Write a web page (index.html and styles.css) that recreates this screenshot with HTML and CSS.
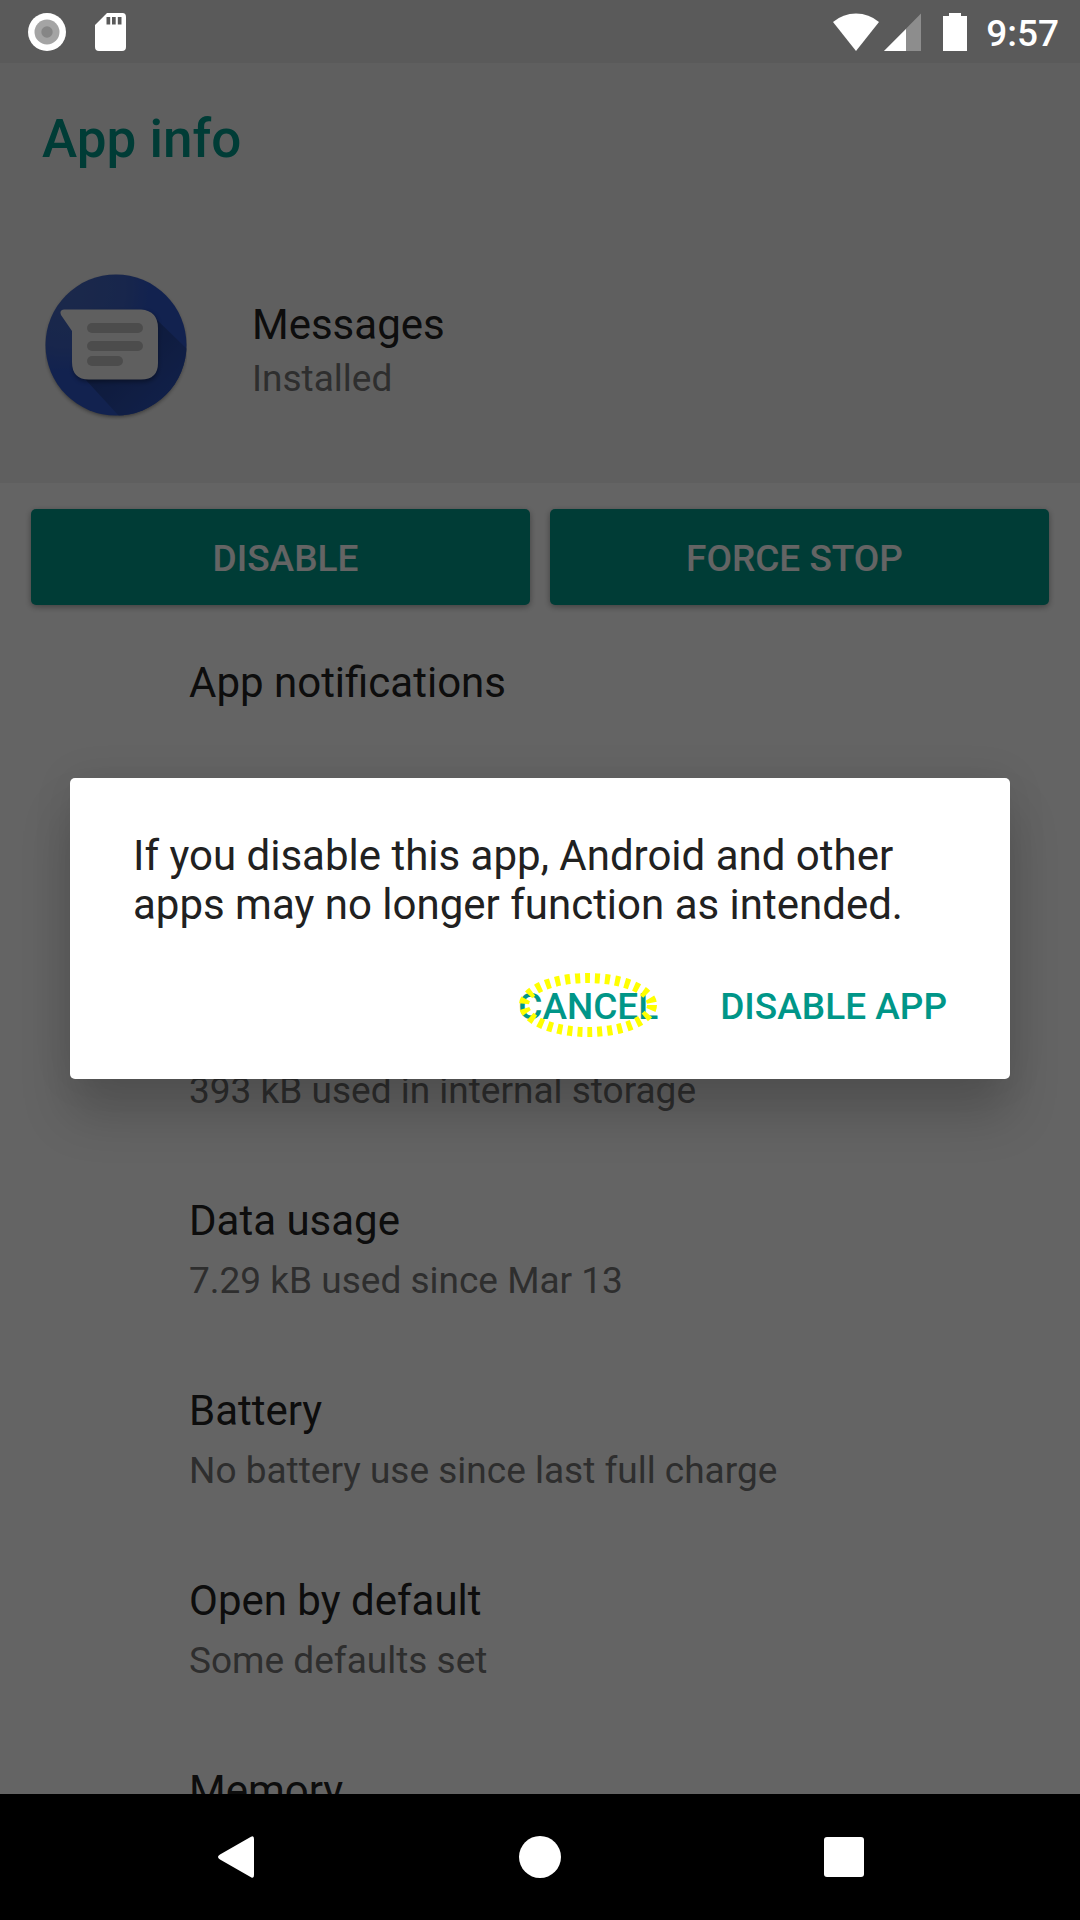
FILE: index.html
```html
<!DOCTYPE html>
<html lang="en">
<head>
<meta charset="utf-8">
<meta name="viewport" content="width=device-width, initial-scale=1">
<title>App info</title>
<link rel="stylesheet" href="styles.css">
</head>
<body>
<div class="screen">
  <div class="status-bar">
    <div class="status-group status-left">
      <svg width="38" height="38" viewBox="0 0 38 38" aria-hidden="true"><circle cx="19" cy="19" r="19" fill="#fff"/><circle cx="19" cy="19" r="12.5" fill="#a4a4a4"/><circle cx="19" cy="19" r="5.7" fill="#868686"/></svg>
      <svg width="31" height="38" viewBox="0 0 31 38" aria-hidden="true"><path fill="#fff" fill-rule="evenodd" d="M12 0H27.500Q31 0 31 4V34Q31 38 27 38H4Q0 38 0 34V12ZM11.500 4V11.500H15.200V4ZM17 4V11.500H20.700V4ZM22.800 4V11.500H26.500V4Z"/></svg>
    </div>
    <div class="status-group">
      <svg width="46" height="38" viewBox="0 0 46 38" aria-hidden="true"><path fill="#fff" d="M0 9Q10 .5 23 .5T46 9L23 38Z"/></svg>
      <svg class="signal" width="37" height="38" viewBox="0 0 37 38" aria-hidden="true"><path fill="#8d8d8d" d="M37 .5V38H0Z"/><path fill="#fff" d="M22 16V38H0Z"/></svg>
      <svg class="battery" width="24" height="38" viewBox="0 0 24 38" aria-hidden="true"><path fill="#fff" d="M6 0H18V3H24V38H0V3H6Z"/></svg>
      <time class="clock">9:57</time>
    </div>
  </div>

  <main class="content">
    <header class="app-header">
      <h1 class="page-title">App info</h1>
      <div class="app-summary">
        <svg class="app-icon" width="142" height="146" viewBox="0 0 142 146" aria-hidden="true">
          <defs>
            <radialGradient id="disc" cx="0.15" cy="0.1" r="0.6"><stop offset="0" stop-color="#4566bb"/><stop offset="0.7" stop-color="#3c5fbd"/><stop offset="1" stop-color="#2d55c6"/></radialGradient>
            <linearGradient id="fall" x1="0" y1="0" x2="1" y2="1"><stop offset="0.2" stop-color="#223f8c"/><stop offset="0.8" stop-color="#2b50b4"/></linearGradient>
            <clipPath id="round"><circle cx="71" cy="71" r="70.500"/></clipPath>
            <filter id="soft" x="-20%" y="-20%" width="140%" height="140%"><feGaussianBlur stdDeviation="2"/></filter>
          </defs>
          <circle cx="71" cy="73" r="69.500" fill="#000" opacity=".5" filter="url(#soft)"/>
          <circle cx="71" cy="71" r="70.500" fill="url(#disc)"/>
          <g clip-path="url(#round)">
            <path d="M110 44L142 75V142H74L40 105Z" fill="url(#fall)"/>
            <path d="M44 38H98Q113 38 113 53V92Q113 108 97 108H44Q28 108 28 92Z" fill="#000" opacity=".35" filter="url(#soft)"/>
          </g>
          <path fill="#eee" d="M19 35.500H96Q113 37 113 54V89Q113 105.500 96 105.500H44Q27 105.500 27 88V57L16 41Q14 36 19 35.500Z"/>
          <g fill="#bdbdbd"><rect x="42" y="49" width="56" height="10" rx="5"/><rect x="42" y="67" width="56" height="10" rx="5"/><rect x="42" y="82" width="36" height="10" rx="5"/></g>
        </svg>
        <div>
          <h2 class="item-title">Messages</h2>
          <p class="item-note">Installed</p>
        </div>
      </div>
    </header>

    <div class="actions">
      <button class="action action-start" type="button">DISABLE</button>
      <button class="action action-end" type="button">FORCE STOP</button>
    </div>

    <ul class="settings">
      <li class="setting setting-tall"><h2 class="item-title">App notifications</h2></li>
      <li class="setting setting-end"><p class="item-note">393 kB used in internal storage</p></li>
      <li class="setting"><h2 class="item-title">Data usage</h2><p class="item-note">7.29 kB used since Mar 13</p></li>
      <li class="setting"><h2 class="item-title">Battery</h2><p class="item-note">No battery use since last full charge</p></li>
      <li class="setting"><h2 class="item-title">Open by default</h2><p class="item-note">Some defaults set</p></li>
      <li class="setting"><h2 class="item-title">Memory</h2></li>
    </ul>

    <div class="scrim">
      <div class="dialog" role="alertdialog" aria-modal="true" aria-describedby="message">
        <p class="message" id="message">If you disable this app, Android and other apps may no longer function as intended.</p>
        <div class="dialog-actions">
          <button class="choice" type="button">CANCEL<svg class="ring" width="140" height="66" viewBox="0 0 140 66" aria-hidden="true"><ellipse cx="70" cy="33" rx="64" ry="27" fill="none" stroke="#ff0" stroke-width="10" stroke-dasharray="5 5"/></svg></button>
          <button class="choice" type="button">DISABLE APP</button>
        </div>
      </div>
    </div>
  </main>

  <nav class="nav-bar">
    <button class="nav-button" type="button" aria-label="Back"><svg width="42" height="42" viewBox="0 0 42 42"><path fill="#fff" d="M5 18.500L36 .8Q39 -1 39 3V39Q39 43 36 41.200L5 23.500Q1 21 5 18.500Z"/></svg></button>
    <button class="nav-button" type="button" aria-label="Home"><svg width="42" height="42" viewBox="0 0 42 42"><circle cx="21" cy="21" r="21" fill="#fff"/></svg></button>
    <button class="nav-button" type="button" aria-label="Recent apps"><svg width="42" height="42" viewBox="0 0 42 42"><rect x="1" y="1" width="40" height="40" rx="3" fill="#fff"/></svg></button>
  </nav>
</div>
</body>
</html>
```
FILE: styles.css
```css
* {
  box-sizing: border-box;
}

body,
h1,
h2,
p,
ul {
  margin: 0;
  padding: 0;
}

body {
  font-family: Roboto, "Liberation Sans", sans-serif;
  color: #212121;
}

svg {
  display: block;
  flex: none;
}

button {
  border: 0;
  padding: 0;
  font-family: inherit;
  font-size: 37px;
  font-weight: 500;
  line-height: 43px;
  cursor: pointer;
}

.screen {
  display: flex;
  flex-direction: column;
  height: 100vh;
}

.status-bar {
  display: flex;
  flex: none;
  justify-content: space-between;
  align-items: center;
  height: 63px;
  padding: 0 21px 0 28px;
  background: #5a5a5a;
}

.status-group {
  display: flex;
  align-items: center;
}

.status-left {
  gap: 29px;
}

.signal {
  margin-left: 5px;
}

.battery {
  margin: 0 19px 0 22px;
}

.clock {
  color: #fff;
  font-size: 37px;
  font-weight: 500;
  line-height: 43px;
  padding-top: 4px;
}

.content {
  position: relative;
  flex: 1;
  min-height: 0;
  overflow: hidden;
  background: #fafafa;
}

.app-header {
  height: 420px;
  padding: 45px 42px;
  background: #eee;
}

.page-title {
  color: #009688;
  font-size: 53px;
  font-weight: 500;
  line-height: 62px;
}

.app-summary {
  display: flex;
  gap: 65px;
  margin-top: 104px;
  padding-left: 3px;
}

.app-summary > div {
  padding-top: 26px;
}

.item-title {
  font-size: 42px;
  font-weight: 400;
  line-height: 49px;
}

.item-note {
  color: #737373;
  font-size: 37px;
  line-height: 43px;
}

.app-summary .item-note {
  padding-top: 8px;
}

.actions {
  display: flex;
  gap: 20px;
  padding: 26px 31px 11px;
}

.action {
  flex: 1;
  height: 96px;
  padding-top: 2px;
  border-radius: 5px;
  background: #009688;
  box-shadow: 0 2px 6px rgba(0, 0, 0, 0.35);
  color: #fafafa;
}

.action-start {
  padding-left: 10px;
}

.action-end {
  padding-right: 10px;
}

.settings {
  list-style: none;
}

.setting {
  display: flex;
  flex-direction: column;
  gap: 14px;
  height: 190px;
  padding: 42px 189px;
}

.setting-tall {
  height: 348px;
}

.setting-end {
  justify-content: flex-end;
}

.scrim {
  position: absolute;
  inset: 0;
  display: flex;
  justify-content: center;
  align-items: center;
  padding: 0 70px;
  background: rgba(0, 0, 0, 0.6);
}

.dialog {
  width: 100%;
  padding: 53px 63px 51px;
  border-radius: 5px;
  background: #fff;
  box-shadow: 0 36px 50px rgba(0, 0, 0, 0.18), 0 0 40px rgba(0, 0, 0, 0.08);
}

.message {
  font-size: 42px;
  line-height: 49px;
}

.dialog-actions {
  display: flex;
  justify-content: flex-end;
  gap: 62px;
  margin-top: 56px;
}

.choice {
  position: relative;
  background: none;
  color: #009688;
}

.ring {
  position: absolute;
  top: -13px;
  left: 0;
}

.nav-bar {
  display: flex;
  flex: none;
  justify-content: center;
  gap: 262px;
  height: 126px;
  background: #000;
}

.nav-button {
  display: flex;
  align-items: center;
  background: none;
}
```
